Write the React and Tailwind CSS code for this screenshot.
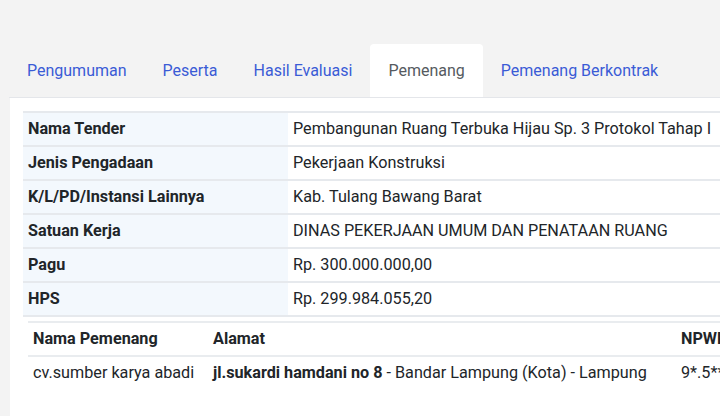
import React from 'react';

const tabs = ['Pengumuman', 'Peserta', 'Hasil Evaluasi', 'Pemenang', 'Pemenang Berkontrak'];

const info = [
  ['Nama Tender', 'Pembangunan Ruang Terbuka Hijau Sp. 3 Protokol Tahap I'],
  ['Jenis Pengadaan', 'Pekerjaan Konstruksi'],
  ['K/L/PD/Instansi Lainnya', 'Kab. Tulang Bawang Barat'],
  ['Satuan Kerja', 'DINAS PEKERJAAN UMUM DAN PENATAAN RUANG'],
  ['Pagu', 'Rp. 300.000.000,00'],
  ['HPS', 'Rp. 299.984.055,20'],
];

export default function App() {
  return (
    <div
      className="w-[720px] h-[416px] overflow-hidden bg-[#f3f3f3] text-[16.2px] text-[#212529]"
      style={{ fontFamily: 'Roboto, "Noto Sans", sans-serif' }}
    >
      <div className="pt-[44px] pl-[9px]">
        {/* tabs */}
        <div className="flex border-b border-[#e4e6ea] text-[16px]">
          {tabs.map((t) => (
            <div
              key={t}
              className={
                t === 'Pemenang'
                  ? 'h-[53px] px-[18px] flex items-center bg-white rounded-t-[4px] text-[#555a60] -mb-px'
                  : 'h-[53px] px-[18px] flex items-center text-[#3a5bd6]'
              }
            >
              {t}
            </div>
          ))}
        </div>

        {/* card */}
        <div className="ml-px bg-white h-[400px] pt-[13px] pl-[13px]">
          <table className="w-[780px] border-collapse">
            <tbody>
              {info.map(([k, v]) => (
                <tr key={k} className="border-y-2 border-[#e6e9ed]">
                  <td className="w-[265px] bg-[#f3f8fd] px-[5px] h-[34px] font-bold whitespace-nowrap">{k}</td>
                  <td className="px-[5px] h-[34px] whitespace-nowrap">{v}</td>
                </tr>
              ))}
            </tbody>
          </table>

          <div className="pl-[5px] pt-[4px]">
            <table className="w-[820px] border-collapse">
              <thead>
                <tr className="border-y-2 border-[#e9ecef]">
                  <th className="w-[180px] text-left px-[5px] h-[34px] font-bold whitespace-nowrap">Nama Pemenang</th>
                  <th className="w-[468px] text-left px-[5px] h-[34px] font-bold whitespace-nowrap">Alamat</th>
                  <th className="text-left px-[5px] h-[34px] font-bold whitespace-nowrap">NPWP</th>
                </tr>
              </thead>
              <tbody>
                <tr>
                  <td className="px-[5px] h-[34px] whitespace-nowrap">cv.sumber karya abadi</td>
                  <td className="px-[5px] h-[34px] whitespace-nowrap">
                    <span className="font-bold">jl.sukardi hamdani no 8</span> - Bandar Lampung (Kota) - Lampung
                  </td>
                  <td className="px-[5px] h-[34px] whitespace-nowrap">9*.5**.***.*-***.***</td>
                </tr>
              </tbody>
            </table>
          </div>
        </div>
      </div>
    </div>
  );
}
